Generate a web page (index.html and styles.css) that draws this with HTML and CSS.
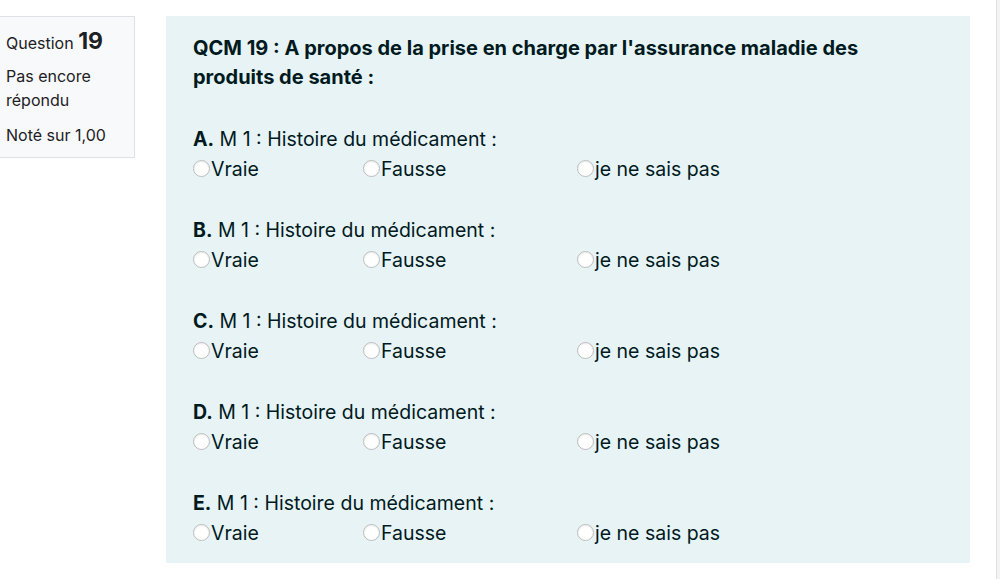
FILE: index.html
```html
<!DOCTYPE html>
<html lang="fr">
<head>
<meta charset="utf-8">
<title>Question 19</title>
<link rel="stylesheet" href="styles.css">
</head>
<body>
<div class="page">
  <div class="info">
    <div class="qno">Question <b>19</b></div>
    <div class="state">Pas encore répondu</div>
    <div class="grade">Noté sur 1,00</div>
  </div>
  <div class="formulation">
    <p class="qtext">QCM 19 : A propos de la prise en charge par l'assurance maladie des produits de santé :</p>
    <div class="items">
      <div class="item">
        <div class="label"><b>A.</b> M 1 : Histoire du médicament :</div>
        <div class="choices">
          <label class="choice"><span class="radio"></span>Vraie</label>
          <label class="choice"><span class="radio"></span>Fausse</label>
          <label class="choice"><span class="radio"></span>je ne sais pas</label>
        </div>
      </div>
      <div class="item">
        <div class="label"><b>B.</b> M 1 : Histoire du médicament :</div>
        <div class="choices">
          <label class="choice"><span class="radio"></span>Vraie</label>
          <label class="choice"><span class="radio"></span>Fausse</label>
          <label class="choice"><span class="radio"></span>je ne sais pas</label>
        </div>
      </div>
      <div class="item">
        <div class="label"><b>C.</b> M 1 : Histoire du médicament :</div>
        <div class="choices">
          <label class="choice"><span class="radio"></span>Vraie</label>
          <label class="choice"><span class="radio"></span>Fausse</label>
          <label class="choice"><span class="radio"></span>je ne sais pas</label>
        </div>
      </div>
      <div class="item">
        <div class="label"><b>D.</b> M 1 : Histoire du médicament :</div>
        <div class="choices">
          <label class="choice"><span class="radio"></span>Vraie</label>
          <label class="choice"><span class="radio"></span>Fausse</label>
          <label class="choice"><span class="radio"></span>je ne sais pas</label>
        </div>
      </div>
      <div class="item">
        <div class="label"><b>E.</b> M 1 : Histoire du médicament :</div>
        <div class="choices">
          <label class="choice"><span class="radio"></span>Vraie</label>
          <label class="choice"><span class="radio"></span>Fausse</label>
          <label class="choice"><span class="radio"></span>je ne sais pas</label>
        </div>
      </div>
    </div>
  </div>
  <div class="edge"></div>
</div>
</body>
</html>
```
FILE: styles.css
```css
html, body {
  margin: 0;
  padding: 0;
  background: #ffffff;
  height: 100%;
}
body {
  font-family: Inter, "Liberation Sans", Arial, sans-serif;
  color: #1d2125;
}
.page {
  display: flex;
  align-items: flex-start;
  padding-top: 16px;
  height: 579px;
  box-sizing: border-box;
}
.info {
  width: 128px;
  flex: none;
  background: #f8f9fa;
  border: 1px solid #dee2e6;
  border-left: none;
  padding: 12px 0 10px 6px;
  font-size: 16px;
  line-height: 24px;
}
.qno {
  font-size: 16px;
  margin-bottom: 9px;
}
.qno b {
  font-size: 23px;
}
.state {
  margin-bottom: 11px;
}
.formulation {
  flex: none;
  margin-left: 31px;
  width: 804px;
  height: 547px;
  box-sizing: border-box;
  background: #e7f3f5;
  color: #001a1e;
  padding: 18px 0 0 27px;
}
.qtext {
  margin: 0;
  width: 700px;
  font-weight: bold;
  font-size: 20px;
  line-height: 29px;
}
.items {
  margin-top: 32px;
}
.item {
  height: 91px;
}
.label {
  font-size: 19.5px;
  line-height: 30px;
}
.choices {
  display: grid;
  grid-template-columns: 170px 214px auto;
  font-size: 19.5px;
  line-height: 30px;
}
.choice {
  display: flex;
  align-items: center;
}
.radio {
  width: 15px;
  height: 15px;
  border-radius: 50%;
  border: 1px solid #bcbcbc;
  background: #ffffff;
  box-shadow: inset 0 1px 2px rgba(0,0,0,0.08);
  margin-right: 1px;
  position: relative;
  top: -1px;
  flex: none;
}
.edge {
  margin-left: auto;
  align-self: stretch;
  margin-top: -16px;
  width: 3px;
  border-left: 1px solid #e0e0e0;
  background: #f3f3f3;
}
```
